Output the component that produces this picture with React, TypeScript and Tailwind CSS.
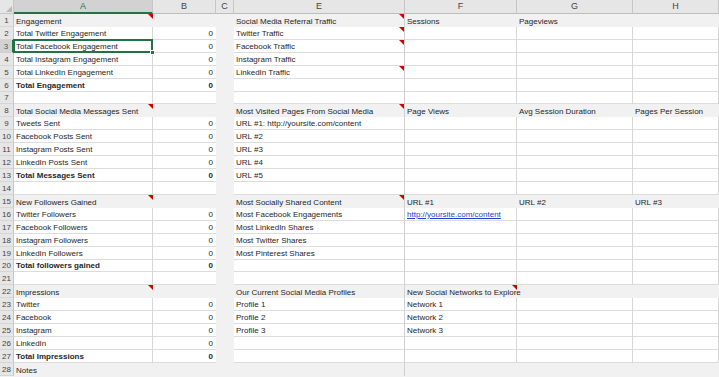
import React from "react";

type RowData = {
  n: number;
  gray?: boolean;
  bold?: boolean;
  a?: string;
  b?: string;
  e?: string;
  f?: string;
  g?: string;
  h?: string;
  triA?: boolean;
  triE?: boolean;
  triF?: boolean;
  link?: boolean;
};

const ROWS: RowData[] = [
  { n: 1, gray: true, a: "Engagement", e: "Social Media Referral Traffic", f: "Sessions", g: "Pageviews", triA: true, triE: true },
  { n: 2, a: "Total Twitter Engagement", b: "0", e: "Twitter Traffic", triE: true },
  { n: 3, a: "Total Facebook Engagement", b: "0", e: "Facebook Traffic", triE: true },
  { n: 4, a: "Total Instagram Engagement", b: "0", e: "Instagram Traffic" },
  { n: 5, a: "Total LinkedIn Engagement", b: "0", e: "LinkedIn Traffic", triE: true },
  { n: 6, bold: true, a: "Total Engagement", b: "0" },
  { n: 7 },
  { n: 8, gray: true, a: "Total Social Media Messages Sent", e: "Most Visited Pages From Social Media", f: "Page Views", g: "Avg Session Duration", h: "Pages Per Session", triA: true, triE: true },
  { n: 9, a: "Tweets Sent", b: "0", e: "URL #1: http://yoursite.com/content" },
  { n: 10, a: "Facebook Posts Sent", b: "0", e: "URL #2" },
  { n: 11, a: "Instagram Posts Sent", b: "0", e: "URL #3" },
  { n: 12, a: "LinkedIn Posts Sent", b: "0", e: "URL #4" },
  { n: 13, bold: true, a: "Total Messages Sent", b: "0", e: "URL #5" },
  { n: 14 },
  { n: 15, gray: true, a: "New Followers Gained", e: "Most Socially Shared Content", f: "URL #1", g: "URL #2", h: "URL #3", triA: true, triE: true },
  { n: 16, a: "Twitter Followers", b: "0", e: "Most Facebook Engagements", f: "http://yoursite.com/content", link: true },
  { n: 17, a: "Facebook Followers", b: "0", e: "Most LinkedIn Shares" },
  { n: 18, a: "Instagram Followers", b: "0", e: "Most Twitter Shares" },
  { n: 19, a: "LinkedIn Followers", b: "0", e: "Most Pinterest Shares" },
  { n: 20, bold: true, a: "Total followers gained", b: "0" },
  { n: 21 },
  { n: 22, gray: true, a: "Impressions", e: "Our Current Social Media Profiles", f: "New Social Networks to Explore", triA: true, triF: true },
  { n: 23, a: "Twitter", b: "0", e: "Profile 1", f: "Network 1" },
  { n: 24, a: "Facebook", b: "0", e: "Profile 2", f: "Network 2" },
  { n: 25, a: "Instagram", b: "0", e: "Profile 3", f: "Network 3" },
  { n: 26, a: "LinkedIn", b: "0" },
  { n: 27, bold: true, a: "Total Impressions", b: "0" },
  { n: 28, gray: true, a: "Notes" },
];

function Tri() {
  return (
    <span className="absolute top-0 right-0 w-0 h-0 border-l-[5px] border-l-transparent border-t-[5px] border-t-[#d40000] z-20" />
  );
}

function cellBase(gray: boolean | undefined) {
  return gray
    ? "relative shrink-0 h-full flex items-end whitespace-nowrap"
    : "relative shrink-0 h-full flex items-end whitespace-nowrap bg-white border-b border-b-[#dcdcdc]";
}

function Row({ r }: { r: RowData }) {
  const sel = r.n === 3;
  const boldCls = r.bold ? "font-bold" : "";
  return (
    <div className="flex h-[12.93px] leading-[10px]">
      <div
        className={
          sel
            ? "shrink-0 w-[14px] h-full flex items-end justify-center bg-[#d2d2d2] text-[#217346] border-r-2 border-r-[#217346] border-b border-b-[#cfcfcf] text-[8px]"
            : "shrink-0 w-[14px] h-full flex items-end justify-center bg-[#e6e6e6] text-[#444444] border-r border-r-[#c6c6c6] border-b border-b-[#d6d6d6] text-[8px]"
        }
      >
        {r.n}
      </div>
      {/* A */}
      <div className={`${cellBase(r.gray)} w-[139px] pl-[2px] ${boldCls} ${r.gray ? "" : "border-r border-r-[#d6d6d6]"} ${sel ? "z-10" : ""}`}>
        <span>{r.a}</span>
        {r.triA && <Tri />}
        {sel && (
          <>
            <span className="absolute left-[-1px] top-[-1px] right-[-1px] bottom-[-1px] border-2 border-[#217346]" />
            <span className="absolute right-[-3px] bottom-[-3px] w-[5px] h-[5px] bg-[#217346] border border-white" />
          </>
        )}
      </div>
      {/* B */}
      <div className={`${cellBase(r.gray)} w-[63px] justify-end pr-[3px] ${boldCls}`}>
        <span>{r.b}</span>
      </div>
      {/* C */}
      <div className="shrink-0 w-[18px] h-full" />
      {/* E */}
      <div className={`${cellBase(r.gray)} w-[171px] pl-[2px] border-r border-r-[#d0d0d0]`}>
        <span>{r.e}</span>
        {r.triE && <Tri />}
      </div>
      {/* F */}
      <div className={`${cellBase(r.gray)} w-[112px] pl-[2px] ${r.gray ? "" : "border-r border-r-[#d6d6d6]"}`}>
        {r.link ? (
          <span className="text-[#1c3fd0] underline">{r.f}</span>
        ) : (
          <span className="relative z-10">{r.f}</span>
        )}
        {r.triF && <Tri />}
      </div>
      {/* G */}
      <div className={`${cellBase(r.gray)} w-[116px] pl-[2px] ${r.gray ? "" : "border-r border-r-[#d6d6d6]"}`}>
        <span>{r.g}</span>
      </div>
      {/* H */}
      <div className={`${cellBase(r.gray)} w-[86px] pl-[2px] ${r.gray ? "" : "border-r border-r-[#d6d6d6]"}`}>
        <span>{r.h}</span>
      </div>
    </div>
  );
}

export default function App() {
  return (
    <div className="w-[719px] h-[377px] overflow-hidden bg-[#f1f1f1] font-['Liberation_Sans',Arial,sans-serif] text-[8px] text-[#262626]">
      <div className="flex h-[14px] text-[9px] leading-[13px] text-[#444444]">
        <div className="relative shrink-0 w-[14px] h-full bg-[#e6e6e6] border-r border-b border-[#c6c6c6]">
          <span className="absolute right-[1px] bottom-[1px] w-0 h-0 border-l-[6px] border-l-transparent border-b-[6px] border-b-[#b8b8b8]" />
        </div>
        <div className="shrink-0 w-[139px] h-full bg-[#d2d2d2] text-[#217346] text-center border-r border-r-[#c6c6c6] border-b-2 border-b-[#217346]">A</div>
        <div className="shrink-0 w-[63px] h-full bg-[#e6e6e6] text-center border-r border-r-[#c6c6c6] border-b border-b-[#bdbdbd]">B</div>
        <div className="shrink-0 w-[18px] h-full bg-[#e6e6e6] text-center border-r border-r-[#c6c6c6] border-b border-b-[#bdbdbd]">C</div>
        <div className="shrink-0 w-[171px] h-full bg-[#e6e6e6] text-center border-r border-r-[#c6c6c6] border-b border-b-[#bdbdbd]">E</div>
        <div className="shrink-0 w-[112px] h-full bg-[#e6e6e6] text-center border-r border-r-[#c6c6c6] border-b border-b-[#bdbdbd]">F</div>
        <div className="shrink-0 w-[116px] h-full bg-[#e6e6e6] text-center border-r border-r-[#c6c6c6] border-b border-b-[#bdbdbd]">G</div>
        <div className="shrink-0 w-[86px] h-full bg-[#e6e6e6] text-center border-r border-r-[#c6c6c6] border-b border-b-[#bdbdbd]">H</div>
      </div>
      {ROWS.map((r) => (
        <Row key={r.n} r={r} />
      ))}
    </div>
  );
}
